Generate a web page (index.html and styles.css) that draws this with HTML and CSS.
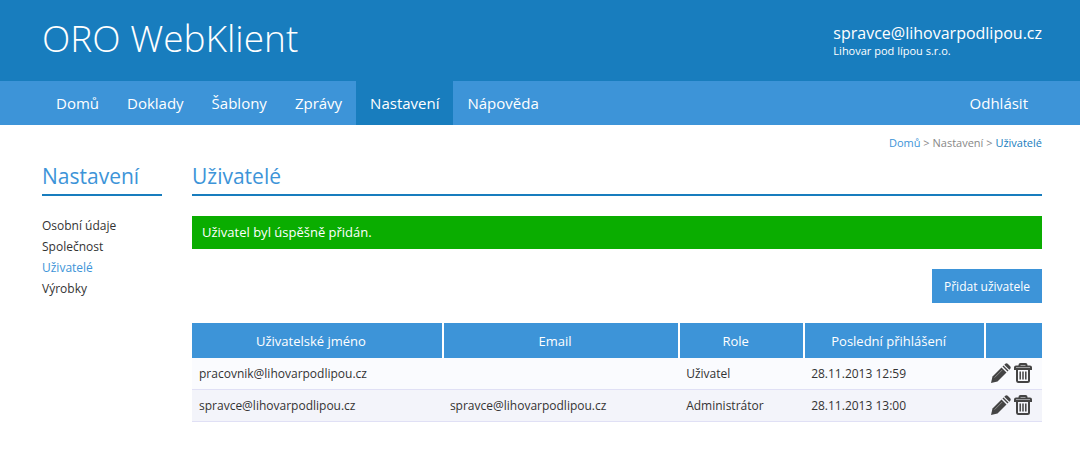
FILE: index.html
```html
<!DOCTYPE html>
<html lang="cs">
<head>
<meta charset="utf-8">
<meta name="viewport" content="width=device-width, initial-scale=1">
<title>ORO WebKlient</title>
<link rel="stylesheet" href="styles.css">
</head>
<body>
<svg class="sprite" aria-hidden="true">
  <symbol id="pencil" viewBox="0 0 20 20">
    <path d="M0 20 1.500 13.500 10.500 4.500 15.500 9.500 6.500 18.500Z"/>
    <path d="M11.500 3.500 12.500 2.500 17.500 7.500 16.500 8.500Z"/>
    <path d="M13.300 1.700 14.300.7Q15.500-.3 16.700.8L19.200 3.300Q20.300 4.500 19.300 5.700L18.300 6.700Z"/>
    <path class="gap" d="M3.600 14.600 11.200 7"/>
  </symbol>
  <symbol id="trash" viewBox="0 0 18 20">
    <path class="line" d="M1 6V4.500Q1 3.500 2 3.500H16Q17 3.500 17 4.500V6ZM5.500 3V2Q5.500 1 6.500 1H11.500Q12.500 1 12.500 2V3M3 6V17.500Q3 19 4.500 19H13.500Q15 19 15 17.500V6"/>
    <path class="slot" d="M6.200 8.500V16.500M9 8.500V16.500M11.800 8.500V16.500"/>
  </symbol>
</svg>
<header class="header">
  <div class="wrap header-row">
    <div class="brand">ORO WebKlient</div>
    <div class="account">
      <div class="account-mail">spravce@lihovarpodlipou.cz</div>
      <div class="account-company">Lihovar pod lípou s.r.o.</div>
    </div>
  </div>
</header>
<nav class="nav">
  <div class="wrap nav-row">
    <a class="nav-link" href="#">Domů</a>
    <a class="nav-link" href="#">Doklady</a>
    <a class="nav-link" href="#">Šablony</a>
    <a class="nav-link" href="#">Zprávy</a>
    <a class="nav-link active" href="#" aria-current="page">Nastavení</a>
    <a class="nav-link" href="#">Nápověda</a>
    <a class="nav-link logout" href="#">Odhlásit</a>
  </div>
</nav>
<div class="wrap crumbs"><a class="crumb" href="#">Domů</a> &gt; Nastavení &gt; <a class="crumb current" href="#">Uživatelé</a></div>
<div class="wrap columns">
  <aside class="side">
    <h2 class="heading">Nastavení</h2>
    <ul class="menu">
      <li><a class="menu-link" href="#">Osobní údaje</a></li>
      <li><a class="menu-link" href="#">Společnost</a></li>
      <li><a class="menu-link selected" href="#">Uživatelé</a></li>
      <li><a class="menu-link" href="#">Výrobky</a></li>
    </ul>
  </aside>
  <main class="main">
    <h1 class="heading">Uživatelé</h1>
    <div class="notice" role="status">Uživatel byl úspěšně přidán.</div>
    <div class="toolbar"><button class="button" type="button">Přidat uživatele</button></div>
    <table class="users">
      <colgroup><col class="c-name"><col class="c-email"><col class="c-role"><col class="c-login"><col class="c-tools"></colgroup>
      <thead>
        <tr><th>Uživatelské jméno</th><th>Email</th><th>Role</th><th>Poslední přihlášení</th><th></th></tr>
      </thead>
      <tbody>
        <tr>
          <td>pracovnik@lihovarpodlipou.cz</td><td></td><td>Uživatel</td><td>28.11.2013 12:59</td>
          <td class="tools"><div class="tool-row">
            <button class="tool" type="button" aria-label="Upravit"><svg class="icon-pencil"><use href="#pencil"/></svg></button>
            <button class="tool" type="button" aria-label="Smazat"><svg class="icon-trash"><use href="#trash"/></svg></button>
          </div></td>
        </tr>
        <tr>
          <td>spravce@lihovarpodlipou.cz</td><td>spravce@lihovarpodlipou.cz</td><td>Administrátor</td><td>28.11.2013 13:00</td>
          <td class="tools"><div class="tool-row">
            <button class="tool" type="button" aria-label="Upravit"><svg class="icon-pencil"><use href="#pencil"/></svg></button>
            <button class="tool" type="button" aria-label="Smazat"><svg class="icon-trash"><use href="#trash"/></svg></button>
          </div></td>
        </tr>
      </tbody>
    </table>
  </main>
</div>
</body>
</html>
```
FILE: styles.css
```css
* { box-sizing: border-box; }
body {
  margin: 0;
  background: #fff;
  color: #333;
  font: 12px/20px "Segoe UI", "Open Sans", "Noto Sans", sans-serif;
}
a { text-decoration: none; }
button { font: inherit; border: 0; cursor: pointer; }
.sprite { position: absolute; width: 0; height: 0; }
.wrap { padding: 0 38px 0 42px; }

.header { background: #187dbe; color: #fff; }
.header-row {
  display: flex;
  justify-content: space-between;
  min-height: 81px;
}
.brand { padding-top: 13px; font-size: 37px; line-height: 50px; font-weight: 300; }
.account { padding-top: 23px; }
.account-mail { font-size: 16px; line-height: 20px; }
.account-company { font-size: 11px; line-height: 16px; }

.nav { background: #3d94d8; }
.nav-row { display: flex; }
.nav-link {
  padding: 0 14px;
  color: #fff;
  font-size: 15px;
  line-height: 44px;
}
.nav-link.active { background: #187dbe; }
.logout { margin-left: auto; }

.crumbs { padding-top: 8px; text-align: right; color: #888; font-size: 11px; }
.crumb { color: #3d94d8; }
.crumb.current { color: #187dbe; }

.columns { display: flex; gap: 30px; padding-top: 8px; }
.side { flex: 0 0 120px; }
.main { flex: 1; min-width: 0; }
.heading {
  margin: 0;
  padding-bottom: 3px;
  border-bottom: 2px solid #187dbe;
  color: #3d94d8;
  font-size: 21px;
  line-height: 30px;
  font-weight: 400;
}
.menu { margin: 19px 0 0; padding: 0; list-style: none; line-height: 21px; }
.menu-link { color: #333; }
.menu-link.selected { color: #3d94d8; }

.notice {
  margin-top: 20px;
  padding: 0 10px;
  background: #0aad00;
  color: #fff;
  font-size: 13px;
  line-height: 33px;
}
.toolbar { display: flex; justify-content: flex-end; padding: 20px 0; }
.button {
  padding: 2px 12px 0;
  background: #3d94d8;
  color: #fff;
  line-height: 32px;
}

.users {
  width: 100%;
  table-layout: fixed;
  border-collapse: separate;
  border-spacing: 0;
}
.c-name { width: 29.4%; }
.c-email { width: 27.8%; }
.c-role { width: 14.7%; }
.c-login { width: 21.3%; }
.c-tools { width: 6.8%; }
.users th {
  height: 35px;
  padding: 0 12px 0 0;
  background: #3d94d8;
  color: #fff;
  font-size: 13px;
  font-weight: 400;
}
.users th + th { border-left: 2px solid #fff; }
.users td {
  height: 32px;
  padding: 0 0 0 7px;
  border-bottom: 1px solid #e0e0f5;
  background: #fafbfe;
}
.users td + td { padding-left: 8px; }
.users td.tools { padding: 0 0 1px 7px; }
.users tr:nth-child(even) td { background: #f3f4fa; }
.tool-row { display: flex; align-items: center; gap: 3px; }
.tool { display: flex; padding: 0; background: none; }
.icon-pencil { width: 20px; height: 20px; fill: #444; }
.icon-trash { width: 18px; height: 20px; }
.gap { fill: none; stroke: #888; stroke-width: 1; }
.line { fill: none; stroke: #444; stroke-width: 2; }
.slot { fill: none; stroke: #444; stroke-width: 1.5; }
```
